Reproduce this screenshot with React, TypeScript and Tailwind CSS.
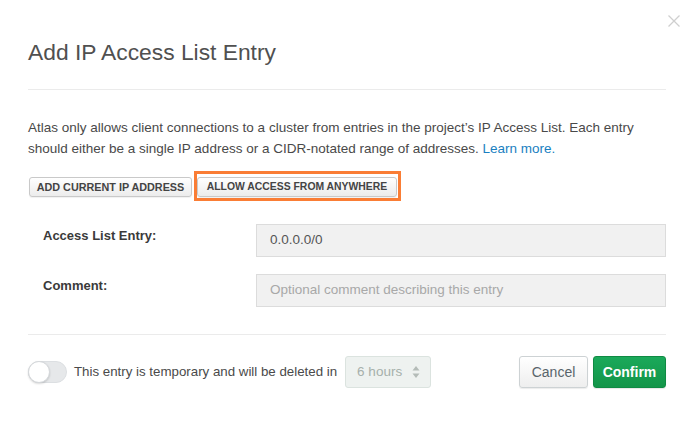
import React from "react";

export default function App() {
  return (
    <div className="w-[694px] h-[421px] bg-white relative overflow-hidden" style={{ fontFamily: '"Liberation Sans", Arial, sans-serif' }}>
      <button className="absolute left-[667px] top-[14px] w-[14px] h-[14px]" aria-label="Close">
        <svg width="14" height="14" viewBox="0 0 14 14">
          <path d="M1.5 1.5 L12.5 12.5 M12.5 1.5 L1.5 12.5" stroke="#cfcfcf" strokeWidth="1.3" fill="none" />
        </svg>
      </button>
      <div className="px-[28px] pt-[37px]">
        <h1 className="text-[22.8px] leading-[30px] text-[#505050] font-normal pb-[22px] border-b border-[#ebebeb]">
          Add IP Access List Entry
        </h1>
        <p className="mt-[27px] text-[13.5px] leading-[21px] text-[#494949]">
          Atlas only allows client connections to a cluster from entries in the project’s IP Access List. Each entry
          <br />
          should either be a single IP address or a CIDR-notated range of addresses.{" "}
          <a className="text-[#1a7fc1]">Learn more.</a>
        </p>
        <div className="mt-[18px] flex items-start gap-[5px] pl-[1px]">
          <button className="block w-[163px] h-[20px] rounded-[3px] border border-[#c9c9c9] bg-gradient-to-b from-white to-[#ececec] text-[10.8px] font-bold text-[#444] leading-none shadow-[0_1px_1px_rgba(0,0,0,0.06)]">
            ADD CURRENT IP ADDRESS
          </button>
          <div className="relative flex">
            <button className="block w-[200px] h-[20px] rounded-[3px] border border-[#c9c9c9] bg-gradient-to-b from-white to-[#ececec] text-[10.4px] font-bold text-[#444] leading-none shadow-[0_1px_1px_rgba(0,0,0,0.06)]">
              ALLOW ACCESS FROM ANYWHERE
            </button>
            <span className="pointer-events-none absolute left-[-3px] right-[-4px] top-[-6px] bottom-[-4px] border-[3px] border-[#fa7d35]" />
          </div>
        </div>
        <div className="mt-[27px] flex flex-col gap-[17px] pb-[27px] border-b border-[#ebebeb]">
          <div className="flex items-start">
            <label className="w-[228px] pl-[15px] pt-[2px] text-[13px] leading-[20px] font-bold text-[#3a3a3a]">Access List Entry:</label>
            <div className="flex-1 h-[33px] border border-[#dcdcdc] bg-[#f1f1f1] px-[13px] flex items-center text-[13.5px] text-[#555]">
              0.0.0.0/0
            </div>
          </div>
          <div className="flex items-start">
            <label className="w-[228px] pl-[15px] pt-[2px] text-[13px] leading-[20px] font-bold text-[#3a3a3a]">Comment:</label>
            <div className="flex-1 h-[33px] border border-[#dcdcdc] bg-[#f1f1f1] px-[13px] flex items-center text-[13.5px] text-[#a8a8a8]">
              Optional comment describing this entry
            </div>
          </div>
        </div>
        <div className="mt-[21px] flex items-center h-[32px]">
          <div className="relative w-[39px] h-[22px] rounded-full bg-[#e6e8ea] border border-[#dcdfe2]">
            <span className="absolute left-[-1px] top-[-1px] w-[22px] h-[22px] rounded-full bg-white border border-[#d5d8db] shadow-[0_1px_2px_rgba(0,0,0,0.15)]" />
          </div>
          <span className="ml-[7px] text-[13.3px] text-[#4a4a4a]">This entry is temporary and will be deleted in</span>
          <div className="ml-[8px] w-[86px] h-[32px] rounded-[3px] border border-[#dbe3df] bg-[#eef2f0] flex items-center pl-[11px] pr-[10px] justify-between">
            <span className="text-[13.5px] text-[#a6b0ab]">6 hours</span>
            <svg width="8" height="14" viewBox="0 0 8 14">
              <path d="M4 1 L7.5 5.5 L0.5 5.5 Z M4 13 L7.5 8.5 L0.5 8.5 Z" fill="#b4bcb8" />
            </svg>
          </div>
          <div className="flex-1" />
          <button className="w-[69px] h-[32px] rounded-[3px] border border-[#cdd2d4] bg-gradient-to-b from-white to-[#eeeeee] text-[14px] text-[#58646b] shadow-[0_1px_1px_rgba(0,0,0,0.08)]">
            Cancel
          </button>
          <button className="ml-[5px] w-[73px] h-[32px] rounded-[3px] border border-[#0f8a43] bg-gradient-to-b from-[#1aa95a] to-[#139549] text-[14px] font-bold text-white shadow-[0_1px_1px_rgba(0,0,0,0.1)]">
            Confirm
          </button>
        </div>
      </div>
    </div>
  );
}
